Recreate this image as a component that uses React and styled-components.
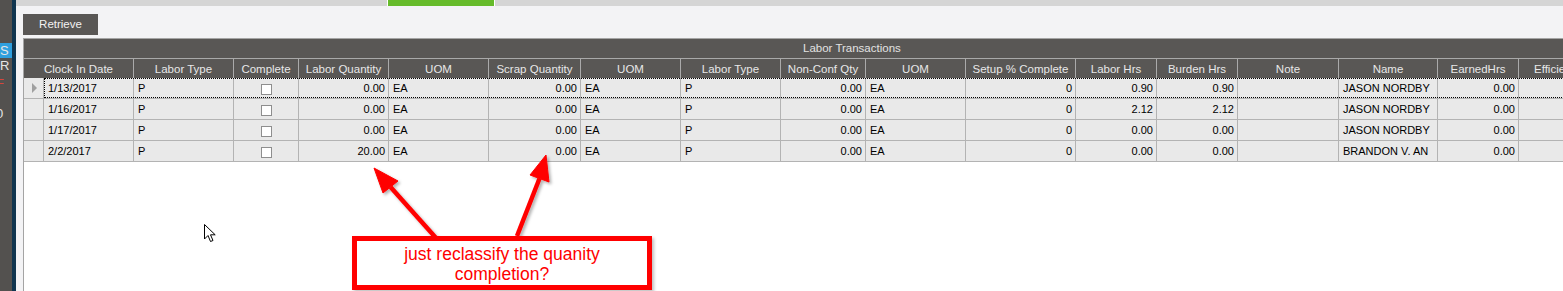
import React from "react";
import styled, { createGlobalStyle, css } from "styled-components";

const GlobalStyle = createGlobalStyle`
  html, body {
    margin: 0;
    padding: 0;
    background: #ffffff;
  }
  body {
    font-family: "Liberation Sans", Arial, sans-serif;
  }
`;

const Screen = styled.div`
  position: relative;
  display: flex;
  width: 1563px;
  height: 291px;
  overflow: hidden;
  background: #ffffff;
`;

const Rail = styled.div`
  flex: 0 0 12px;
  background: #53514f;
  border-right: 4px solid #10354f;
  padding-top: 43px;
  display: flex;
  flex-direction: column;
  overflow: hidden;
`;

const RailItem = styled.div`
  height: ${(p) => p.h || 16}px;
  line-height: 15px;
  font-size: 13px;
  color: ${(p) => p.color || "#e6e6e6"};
  background: ${(p) => (p.active ? "#2f9fde" : "transparent")};
  text-indent: ${(p) => p.indent || 0}px;
  white-space: nowrap;
`;

const Main = styled.div`
  flex: 1;
  display: flex;
  flex-direction: column;
  background: #f3f3f5;
  min-width: 0;
`;

const TabBar = styled.div`
  height: 6px;
  background: #d5d5d5;
  display: flex;
  padding-left: 371px;
`;

const Tab = styled.div`
  width: 106px;
  background: #66bb2b;
  border-left: 1px solid #ffffff;
  border-right: 1px solid #ffffff;
`;

const Toolbar = styled.div`
  padding: 8px 0 3px 7px;
  display: flex;
`;

const Button = styled.div`
  width: 75px;
  height: 21px;
  background: #595755;
  color: #f2f2f2;
  font-size: 11.5px;
  line-height: 21px;
  text-align: center;
`;

const GridArea = styled.div`
  flex: 1;
  margin-left: 7px;
  border-left: 1px solid #a4a4a4;
  border-top: 1px solid #a4a4a4;
  background: #ffffff;
  overflow: hidden;
`;

const Grid = styled.div`
  width: 1700px;
`;

const Title = styled.div`
  height: 19px;
  line-height: 19px;
  background: #595755;
  color: #e2e2e2;
  font-size: 11.5px;
  padding-left: 779px;
`;

const HeaderRow = styled.div`
  display: flex;
  height: 19px;
  border-top: 1px solid #a9a9a9;
  background: #595755;
`;

const HeaderCell = styled.div`
  flex: 0 0 ${(p) => p.w}px;
  box-sizing: border-box;
  border-right: 1px solid #aaaaaa;
  color: #e8e8e8;
  font-size: 11.5px;
  line-height: 20px;
  text-align: center;
  white-space: nowrap;
  overflow: hidden;
`;

const Row = styled.div`
  display: flex;
  height: 21px;
  box-sizing: border-box;
  border-bottom: 1px solid #b3b3b3;
  background: #e9e9e9;
`;

const Indicator = styled.div`
  flex: 0 0 20px;
  box-sizing: border-box;
  border-right: 1px solid #b3b3b3;
  display: flex;
  align-items: center;
  justify-content: center;
  &::after {
    content: "";
    display: ${(p) => (p.current ? "block" : "none")};
    border-left: 5px solid #a0a0a0;
    border-top: 5px solid transparent;
    border-bottom: 5px solid transparent;
    margin-left: 1px;
  }
`;

const Cells = styled.div`
  flex: 1;
  display: flex;
  ${(p) =>
    p.focused &&
    css`
      outline: 1px dotted #000000;
      outline-offset: -1px;
    `}
`;

const Cell = styled.div`
  flex: 0 0 ${(p) => p.w}px;
  box-sizing: border-box;
  border-right: 1px solid #b3b3b3;
  font-size: 11px;
  line-height: 20px;
  color: #000000;
  text-align: ${(p) => p.align || "left"};
  padding: 0 ${(p) => (p.align === "right" ? 3 : 4)}px 0 ${(p) => (p.align === "right" ? 0 : 4)}px;
  white-space: nowrap;
  overflow: hidden;
  display: ${(p) => (p.align === "center" ? "flex" : "block")};
  align-items: center;
  justify-content: center;
`;

const Check = styled.span`
  width: 11px;
  height: 11px;
  margin-top: 3px;
  box-sizing: border-box;
  background: #ffffff;
  border: 1px solid #8e8e8e;
`;

const Overlay = styled.svg`
  position: absolute;
  left: 0;
  top: 0;
  pointer-events: none;
`;

const Callout = styled.div`
  position: absolute;
  left: 352px;
  top: 236px;
  width: 300px;
  height: 54px;
  box-sizing: border-box;
  border: 5px solid #ff0000;
  background: #ffffff;
  box-shadow: 2px 2px 3px rgba(0, 0, 0, 0.25);
  color: #ff0000;
  font-size: 17.5px;
  line-height: 20px;
  text-align: center;
  padding-top: 3px;
`;

const columns = [
  { label: "Clock In Date", w: 90, key: "date" },
  { label: "Labor Type", w: 100, key: "type" },
  { label: "Complete", w: 65, key: "complete", align: "center" },
  { label: "Labor Quantity", w: 90, key: "qty", align: "right" },
  { label: "UOM", w: 100, key: "uom" },
  { label: "Scrap Quantity", w: 92, key: "scrap", align: "right" },
  { label: "UOM", w: 100, key: "uom" },
  { label: "Labor Type", w: 100, key: "type" },
  { label: "Non-Conf Qty", w: 85, key: "nonconf", align: "right" },
  { label: "UOM", w: 100, key: "uom" },
  { label: "Setup % Complete", w: 110, key: "setup", align: "right" },
  { label: "Labor Hrs", w: 81, key: "hrs", align: "right" },
  { label: "Burden Hrs", w: 81, key: "hrs", align: "right" },
  { label: "Note", w: 101, key: "note" },
  { label: "Name", w: 99, key: "name" },
  { label: "EarnedHrs", w: 81, key: "earned", align: "right" },
  { label: "Efficiency", w: 80, key: "eff" },
];

const base = { type: "P", uom: "EA", scrap: "0.00", nonconf: "0.00", setup: "0", note: "", earned: "0.00", eff: "" };

const rows = [
  { ...base, date: "1/13/2017", qty: "0.00", hrs: "0.90", name: "JASON NORDBY" },
  { ...base, date: "1/16/2017", qty: "0.00", hrs: "2.12", name: "JASON NORDBY" },
  { ...base, date: "1/17/2017", qty: "0.00", hrs: "0.00", name: "JASON NORDBY" },
  { ...base, date: "2/2/2017", qty: "20.00", hrs: "0.00", name: "BRANDON V. AN" },
];

const Arrow = ({ tail, tip, left, right }) => (
  <g fill="#ff0000" stroke="#ff0000" filter="url(#shadow)">
    <line x1={tail[0]} y1={tail[1]} x2={(left[0] + right[0]) / 2} y2={(left[1] + right[1]) / 2} strokeWidth="4.5" />
    <polygon points={`${tip[0]},${tip[1]} ${left[0]},${left[1]} ${right[0]},${right[1]}`} strokeWidth="1" />
  </g>
);

export default function App() {
  return (
    <>
      <GlobalStyle />
      <Screen>
        <Rail>
          <RailItem active indent={0} h={15}>S</RailItem>
          <RailItem h={18}>R</RailItem>
          <RailItem color="#d9453a" indent={-4} h={16}>F</RailItem>
          <RailItem h={14} />
          <RailItem indent={-4}>0</RailItem>
        </Rail>
        <Main>
          <TabBar>
            <Tab />
          </TabBar>
          <Toolbar>
            <Button>Retrieve</Button>
          </Toolbar>
          <GridArea>
            <Grid>
              <Title>Labor Transactions</Title>
              <HeaderRow>
                {columns.map((c, i) => (
                  <HeaderCell key={i} w={i === 0 ? c.w + 20 : c.w}>
                    {c.label}
                  </HeaderCell>
                ))}
              </HeaderRow>
              {rows.map((r, ri) => (
                <Row key={ri}>
                  <Indicator current={ri === 0} />
                  <Cells focused={ri === 0}>
                    {columns.map((c, ci) => (
                      <Cell key={ci} w={c.w} align={c.align}>
                        {c.key === "complete" ? <Check /> : r[c.key]}
                      </Cell>
                    ))}
                  </Cells>
                </Row>
              ))}
            </Grid>
          </GridArea>
        </Main>

        <Overlay width="1563" height="291" viewBox="0 0 1563 291">
          <defs>
            <filter id="shadow" x="-30%" y="-30%" width="160%" height="160%">
              <feDropShadow dx="2" dy="2" stdDeviation="1.5" floodColor="#000000" floodOpacity="0.3" />
            </filter>
          </defs>
          <Arrow tail={[436, 238]} tip={[374, 168]} left={[398, 181]} right={[383, 193]} />
          <Arrow tail={[517, 236]} tip={[546, 155]} left={[549, 182]} right={[530, 175]} />
          <g transform="translate(204 224)">
            <path d="M0.5 0.5 L0.5 15 L4 11.5 L6.5 17.5 L9 16.5 L6.5 10.8 L11.2 10.8 Z" fill="#ffffff" stroke="#000000" strokeWidth="1" strokeLinejoin="miter" />
          </g>
        </Overlay>

        <Callout>
          just reclassify the quanity
          <br />
          completion?
        </Callout>
      </Screen>
    </>
  );
}
